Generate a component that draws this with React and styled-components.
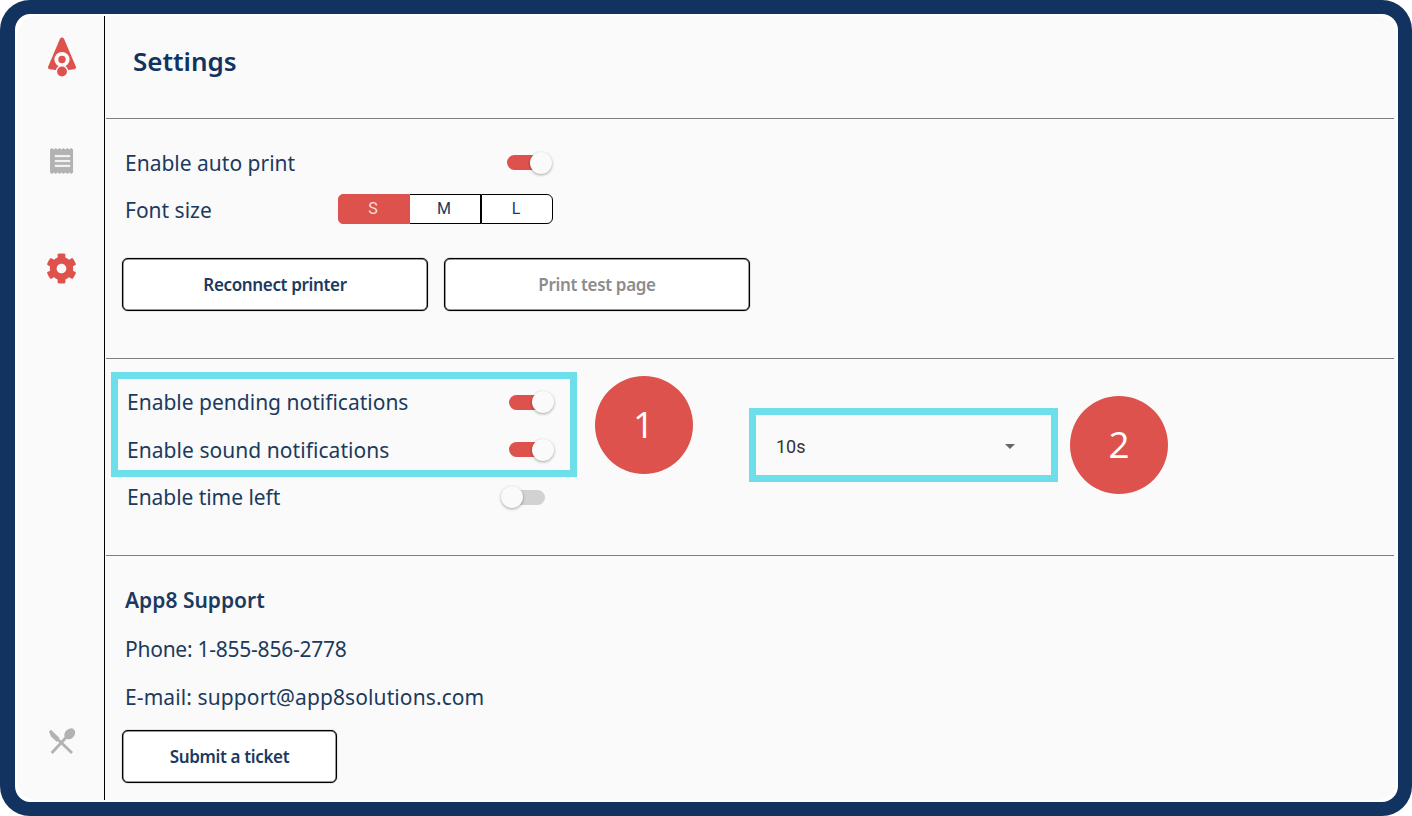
import React from "react";
import styled, { createGlobalStyle } from "styled-components";
import { FaCog } from "react-icons/fa";

const RED = "#dd524c";
const NAVY = "#12335f";
const TEXT = "#1c3a5e";
const CYAN = "#6ddfea";
const GRAY = "#b2b2b2";

function Logo() {
  return (
    <svg width="30" height="42" viewBox="0 0 30 42">
      <path d="M15 1.500c1 0 1.700.6 2.200 1.700L28.800 30.500c.5 1.300-.2 2.500-1.500 2.700l-6 .7H8.700l-6-.7C1.400 33 .7 31.800 1.200 30.500L12.800 3.200C13.300 2.100 14 1.500 15 1.500Z" fill={RED} />
      <circle cx="15" cy="23.500" r="7.600" fill="#fafafa" />
      <circle cx="15" cy="23.500" r="3.700" fill={RED} />
      <circle cx="15" cy="35.500" r="6.400" fill="#fafafa" />
      <circle cx="15" cy="35.500" r="4.900" fill={RED} />
    </svg>
  );
}

function ReceiptIcon() {
  return (
    <svg width="25" height="26" viewBox="0 0 26 28" preserveAspectRatio="none">
      <path
        d="M0 1.500l2-1.500 2 1.500 2-1.500 2 1.500 2-1.500 2 1.500 2-1.500 2 1.500 2-1.500 2 1.500 2-1.500 2 1.500V26.500l-2 1.500-2-1.500-2 1.500-2-1.500-2 1.500-2-1.500-2 1.500-2-1.500-2 1.500-2-1.500-2 1.500-2-1.500Z"
        fill={GRAY}
      />
      <rect x="5" y="7.500" width="16" height="2.400" fill="#f2f2f2" />
      <rect x="5" y="12.800" width="16" height="2.400" fill="#f2f2f2" />
      <rect x="5" y="18.100" width="16" height="2.400" fill="#f2f2f2" />
    </svg>
  );
}

function UtensilsIcon() {
  return (
    <svg width="28" height="28" viewBox="0 0 28 28">
      <path d="M1 3.500 3 1.800 11.500 10 9 14 3 8.500Z" fill={GRAY} />
      <path d="M9 10.500 24 25" stroke={GRAY} strokeWidth="2.800" fill="none" />
      <ellipse cx="21.700" cy="5.800" rx="6" ry="4.800" transform="rotate(-45 21.700 5.800)" fill={GRAY} />
      <path d="M18 9.500 3.700 25" stroke={GRAY} strokeWidth="2.800" fill="none" />
    </svg>
  );
}

function Toggle({ on, end = 6 }) {
  return (
    <Track $on={on} $end={end}>
      <Thumb $on={on} />
    </Track>
  );
}

export default function App() {
  return (
    <>
      <GlobalStyle />
      <Frame>
        <Panel>
          <Sidebar>
            <NavItem $top={20}><Logo /></NavItem>
            <NavItem $top={70}><ReceiptIcon /></NavItem>
            <NavItem $top={79} $shift={-1}><FaCog size={31} color={RED} /></NavItem>
            <NavItem $push><UtensilsIcon /></NavItem>
          </Sidebar>
          <Main>
            <Header>
              <Title>Settings</Title>
            </Header>

            <PrintSection>
              <Row>
                <Label>Enable auto print</Label>
                <Toggle on end={8} />
              </Row>
              <Row>
                <Label>Font size</Label>
                <Segments>
                  <Segment $active>S</Segment>
                  <Segment>M</Segment>
                  <Segment>L</Segment>
                </Segments>
              </Row>
              <ButtonRow>
                <Button $width={306}>Reconnect printer</Button>
                <Button $width={306} $disabled>Print test page</Button>
              </ButtonRow>
            </PrintSection>

            <NotifySection>
              <HighlightOne />
              <BadgeOne>1</BadgeOne>
              <NotifyRows>
                <NotifyRow>
                  <Label>Enable pending notifications</Label>
                  <Toggle on />
                </NotifyRow>
                <NotifyRow>
                  <Label $tracking={0.05}>Enable sound notifications</Label>
                  <Toggle on />
                </NotifyRow>
                <NotifyRow>
                  <Label $tracking={-0.05}>Enable time left</Label>
                  <Toggle end={8} />
                </NotifyRow>
              </NotifyRows>
              <Select>
                <span>10s</span>
                <Caret />
              </Select>
              <BadgeTwo>2</BadgeTwo>
            </NotifySection>

            <SupportSection>
              <SupportTitle>App8 Support</SupportTitle>
              <Label $tracking={-0.25}>Phone: 1-855-856-2778</Label>
              <Label $tracking={0.1}>E-mail: support@app8solutions.com</Label>
              <SubmitButton $width={215}>Submit a ticket</SubmitButton>
            </SupportSection>
          </Main>
        </Panel>
      </Frame>
    </>
  );
}

const GlobalStyle = createGlobalStyle`
  html, body {
    margin: 0;
    padding: 0;
    background: #fff;
    font-family: "Noto Sans", "Open Sans", sans-serif;
  }
  * { box-sizing: border-box; }
`;

const Frame = styled.div`
  width: 1412px;
  height: 816px;
  background: #fff;
  border: solid ${NAVY};
  border-width: 14px 14px 14px 15px;
  border-radius: 30px;
  overflow: hidden;
`;

const Panel = styled.div`
  display: flex;
  height: 100%;
  background: #fafafa;
  border-radius: 22px;
  box-shadow: inset 0 0 0 2px #fff;
  overflow: hidden;
`;

const Sidebar = styled.nav`
  width: 90px;
  height: 784px;
  margin-top: 2px;
  flex: none;
  display: flex;
  flex-direction: column;
  align-items: center;
  border-right: 1px solid #000;
  padding-bottom: 44px;
  padding-left: 5px;
`;

const NavItem = styled.div`
  display: flex;
  margin-top: ${(p) => (p.$push ? "auto" : `${p.$top}px`)};
  margin-left: ${(p) => (p.$shift || 0) * 2}px;
`;

const Main = styled.main`
  flex: 1;
  min-width: 0;
  padding: 0 4px 0 1px;
`;

const Header = styled.header`
  height: 105px;
  padding: 29px 0 0 27px;
  border-bottom: 1.5px solid #7f7f7f;
`;

const Title = styled.h1`
  margin: 0;
  font-size: 26px;
  line-height: 36px;
  font-weight: 600;
  color: ${NAVY};
`;

const PrintSection = styled.section`
  height: 240px;
  padding: 20px 0 0 19px;
  border-bottom: 1px solid #7f7f7f;
`;

const Row = styled.div`
  display: flex;
  align-items: center;
  justify-content: space-between;
  width: 428px;
  height: 47px;
`;

const Label = styled.div`
  font-size: 21px;
  line-height: 30px;
  color: ${TEXT};
  letter-spacing: ${(p) => p.$tracking || 0}px;
`;

const Track = styled.div`
  position: relative;
  width: 38px;
  height: 15px;
  margin-right: ${(p) => p.$end}px;
  border-radius: 8px;
  background: ${(p) => (p.$on ? RED : "#d2d2d2")};
`;

const Thumb = styled.div`
  position: absolute;
  top: -3.500px;
  left: ${(p) => (p.$on ? "23px" : "-6px")};
  width: 22px;
  height: 22px;
  border-radius: 50%;
  background: #fafafa;
  box-shadow: 0 1px 3px rgba(0, 0, 0, 0.35);
`;

const Segments = styled.div`
  display: flex;
  width: 215px;
  height: 30px;
  margin-top: -2px;
`;

const Segment = styled.div`
  flex: 1;
  display: flex;
  align-items: center;
  justify-content: center;
  padding-right: 2px;
  font-family: Roboto, sans-serif;
  font-size: 16px;
  color: ${(p) => (p.$active ? "#f6dcda" : TEXT)};
  background: ${(p) => (p.$active ? RED : "#fff")};
  border: 1.5px solid ${(p) => (p.$active ? RED : "#000")};
  &:first-child { border-radius: 5px 0 0 5px; }
  &:nth-child(2) { border-left: none; border-right-width: 1px; }
  &:last-child { border-radius: 0 6px 6px 0; }
`;

const ButtonRow = styled.div`
  display: flex;
  gap: 16px;
  margin: 25px 0 0 -3px;
`;

const Button = styled.button`
  width: ${(p) => p.$width}px;
  height: 53px;
  flex: none;
  background: #fff;
  border: 1px solid #000;
  box-shadow: inset 0 0 0 0.5px #333, 0 0 1px #333;
  border-radius: 6px;
  font-family: inherit;
  font-size: 17px;
  font-weight: 600;
  letter-spacing: -0.35px;
  color: ${(p) => (p.$disabled ? "#8c8c8c" : TEXT)};
`;

const SubmitButton = styled(Button)`
  margin: -1px 0 0 -3px;
`;

const NotifySection = styled.section`
  position: relative;
  display: flex;
  align-items: flex-start;
  height: 197px;
  padding: 19.500px 0 0 21px;
  border-bottom: 1px solid #7f7f7f;
`;

const NotifyRows = styled.div`
  width: 426px;
`;

const NotifyRow = styled(Row)`
  width: 426px;
  height: 47.500px;
`;

const HighlightOne = styled.div`
  position: absolute;
  left: 5px;
  top: 13px;
  width: 466px;
  height: 105px;
  border: 7px solid ${CYAN};
`;

const Badge = styled.div`
  position: absolute;
  width: 98px;
  height: 98px;
  display: flex;
  align-items: center;
  justify-content: center;
  padding-bottom: 3px;
  border-radius: 50%;
  background: ${RED};
  color: #fff;
  font-family: "Open Sans", sans-serif;
  font-size: 37px;
  font-weight: 400;
`;

const BadgeOne = styled(Badge)`
  left: 488.500px;
  top: 16.500px;
`;

const BadgeTwo = styled(Badge)`
  left: 964px;
  top: 37px;
`;

const Select = styled.div`
  position: absolute;
  left: 643px;
  top: 49px;
  width: 309px;
  height: 74px;
  display: flex;
  align-items: center;
  justify-content: space-between;
  padding: 3px 36px 0 20px;
  border: 7px solid ${CYAN};
  font-family: Roboto, sans-serif;
  font-size: 18px;
  color: #333;
`;

const Caret = styled.span`
  width: 0;
  height: 0;
  border-left: 5.500px solid transparent;
  border-right: 5.500px solid transparent;
  border-top: 5px solid #666;
`;

const SupportSection = styled.section`
  display: flex;
  flex-direction: column;
  align-items: flex-start;
  gap: 18.500px;
  padding: 29px 0 0 19px;
`;

const SupportTitle = styled(Label)`
  font-weight: 600;
`;
